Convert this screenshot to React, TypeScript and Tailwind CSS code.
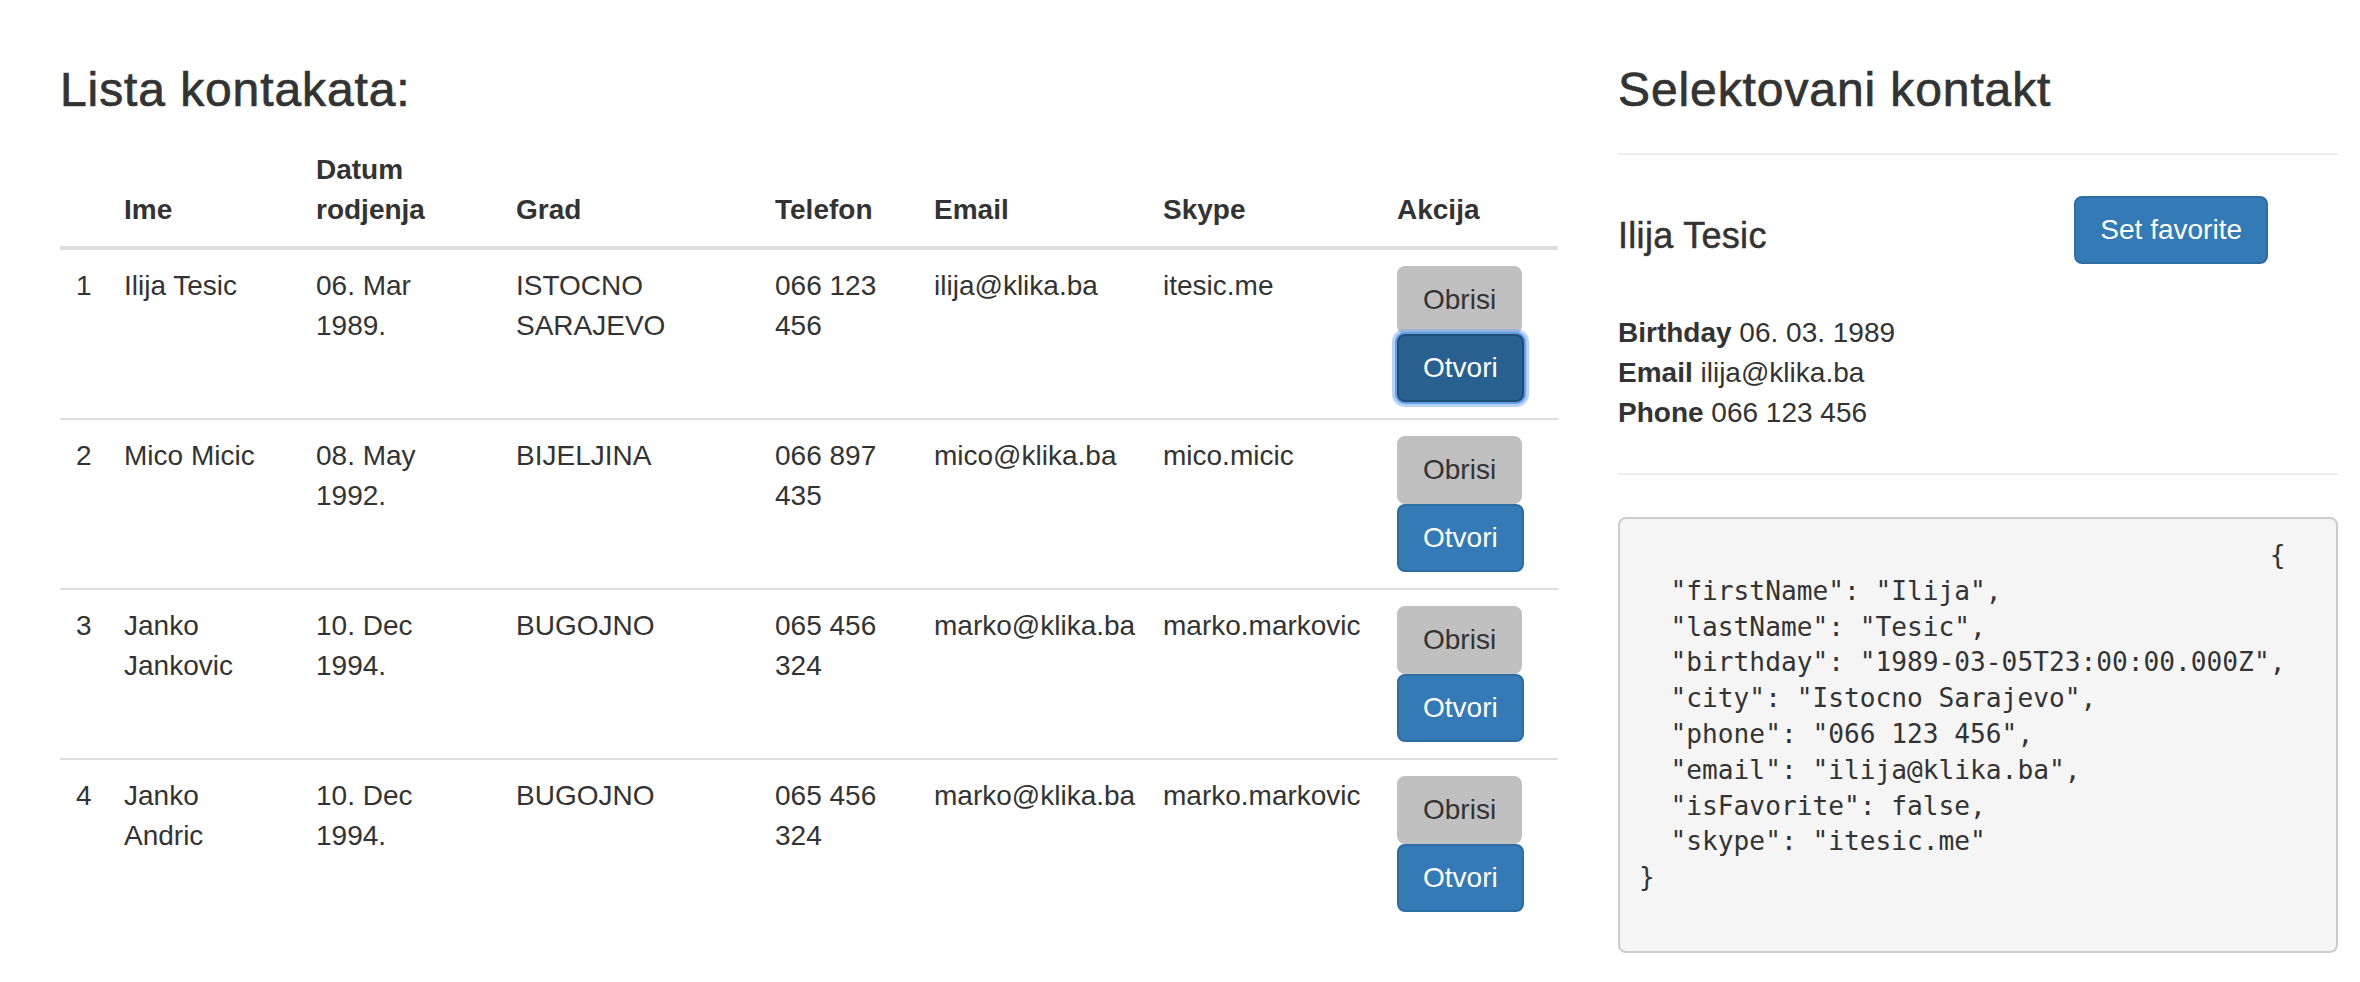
import React from "react";

interface Contact {
  id: number;
  name: string;
  birthday: string;
  city: string;
  phone: string;
  email: string;
  skype: string;
}

const contacts: Contact[] = [
  { id: 1, name: "Ilija Tesic", birthday: "06. Mar 1989.", city: "ISTOCNO SARAJEVO", phone: "066 123 456", email: "ilija@klika.ba", skype: "itesic.me" },
  { id: 2, name: "Mico Micic", birthday: "08. May 1992.", city: "BIJELJINA", phone: "066 897 435", email: "mico@klika.ba", skype: "mico.micic" },
  { id: 3, name: "Janko Jankovic", birthday: "10. Dec 1994.", city: "BUGOJNO", phone: "065 456 324", email: "marko@klika.ba", skype: "marko.markovic" },
  { id: 4, name: "Janko Andric", birthday: "10. Dec 1994.", city: "BUGOJNO", phone: "065 456 324", email: "marko@klika.ba", skype: "marko.markovic" },
];

const json =
  " ".repeat(40) +
  "{\n" +
  '  "firstName": "Ilija",\n' +
  '  "lastName": "Tesic",\n' +
  '  "birthday": "1989-03-05T23:00:00.000Z",\n' +
  '  "city": "Istocno Sarajevo",\n' +
  '  "phone": "066 123 456",\n' +
  '  "email": "ilija@klika.ba",\n' +
  '  "isFavorite": false,\n' +
  '  "skype": "itesic.me"\n' +
  "}\n ";

const btn = "px-[24px] py-[12px] text-[28px] leading-[40px] border-2 rounded-[8px] whitespace-nowrap";
const heading = "text-[48px] leading-[53px] h-[53px] tracking-[0.9px] [-webkit-text-stroke:0.7px_#333]";

const ContactRow = ({ c, focused }: { c: Contact; focused: boolean }) => {
  const td = "border-t-2 border-[#ddd] p-[16px] align-top";
  return (
    <tr>
      <td className={td}>{c.id}</td>
      <td className={td}>{c.name}</td>
      <td className={td}>{c.birthday}</td>
      <td className={td}>{c.city}</td>
      <td className={td}>{c.phone}</td>
      <td className={td}>{c.email}</td>
      <td className={td}>{c.skype}</td>
      <td className={td}>
        <div className="flex flex-col items-start">
          <button className={`${btn} bg-[#c0c0c0] border-[#c0c0c0] text-[#333]`}>Obrisi</button>
          {focused ? (
            <button className={`${btn} bg-[#286090] border-[#204d74] text-white shadow-[0_0_0_2px_#5f9ee8,0_0_0_5px_rgba(110,165,245,0.5)]`}>
              Otvori
            </button>
          ) : (
            <button className={`${btn} bg-[#337ab7] border-[#2e6da4] text-white`}>Otvori</button>
          )}
        </div>
      </td>
    </tr>
  );
};

export default function App() {
  const th = "border-b-4 border-[#ddd] p-[16px] align-bottom text-left font-bold";
  return (
    <div className="min-h-screen bg-white text-[#333] text-[28px] leading-[40px] font-['Liberation_Sans',Arial,sans-serif]">
      <div className="flex pl-[60px] pt-[63px]">
        <div className="w-[1498px]">
          <h3 className={`${heading} mb-[18px]`}>Lista kontakata:</h3>
          <table className="w-full table-fixed border-collapse">
            <colgroup>
              <col className="w-[48px]" />
              <col className="w-[192px]" />
              <col className="w-[200px]" />
              <col className="w-[259px]" />
              <col className="w-[159px]" />
              <col className="w-[229px]" />
              <col className="w-[234px]" />
              <col className="w-[177px]" />
            </colgroup>
            <thead>
              <tr>
                <th className={th}></th>
                <th className={th}>Ime</th>
                <th className={th}>Datum rodjenja</th>
                <th className={th}>Grad</th>
                <th className={th}>Telefon</th>
                <th className={th}>Email</th>
                <th className={th}>Skype</th>
                <th className={th}>Akcija</th>
              </tr>
            </thead>
            <tbody>
              {contacts.map((c, i) => (
                <ContactRow key={c.id} c={c} focused={i === 0} />
              ))}
            </tbody>
          </table>
        </div>

        <div className="w-[720px] ml-[60px]">
          <h3 className={heading}>Selektovani kontakt</h3>
          <hr className="mt-[37px] border-0 border-t-2 border-[#eee]" />
          <div className="flex items-start mt-[41px]">
            <h4 className="flex-1 mt-[20px] text-[36px] leading-[40px] tracking-[0.3px] [-webkit-text-stroke:0.5px_#333]">
              Ilija Tesic
            </h4>
            <button className={`${btn} bg-[#337ab7] border-[#2e6da4] text-white mr-[70px]`}>Set favorite</button>
          </div>
          <div className="mt-[49px]">
            <div>
              <b>Birthday</b> 06. 03. 1989
            </div>
            <div>
              <b>Email</b> ilija@klika.ba
            </div>
            <div>
              <b>Phone</b> 066 123 456
            </div>
          </div>
          <hr className="mt-[40px] border-0 border-t-2 border-[#eee]" />
          <pre className="mt-[42px] border-2 border-[#ccc] rounded-[8px] bg-[#f5f5f5] p-[19px] text-[26.2px] leading-[35.8px] text-[#333] whitespace-pre font-['DejaVu_Sans_Mono',monospace]">
            {json}
          </pre>
        </div>
      </div>
    </div>
  );
}
